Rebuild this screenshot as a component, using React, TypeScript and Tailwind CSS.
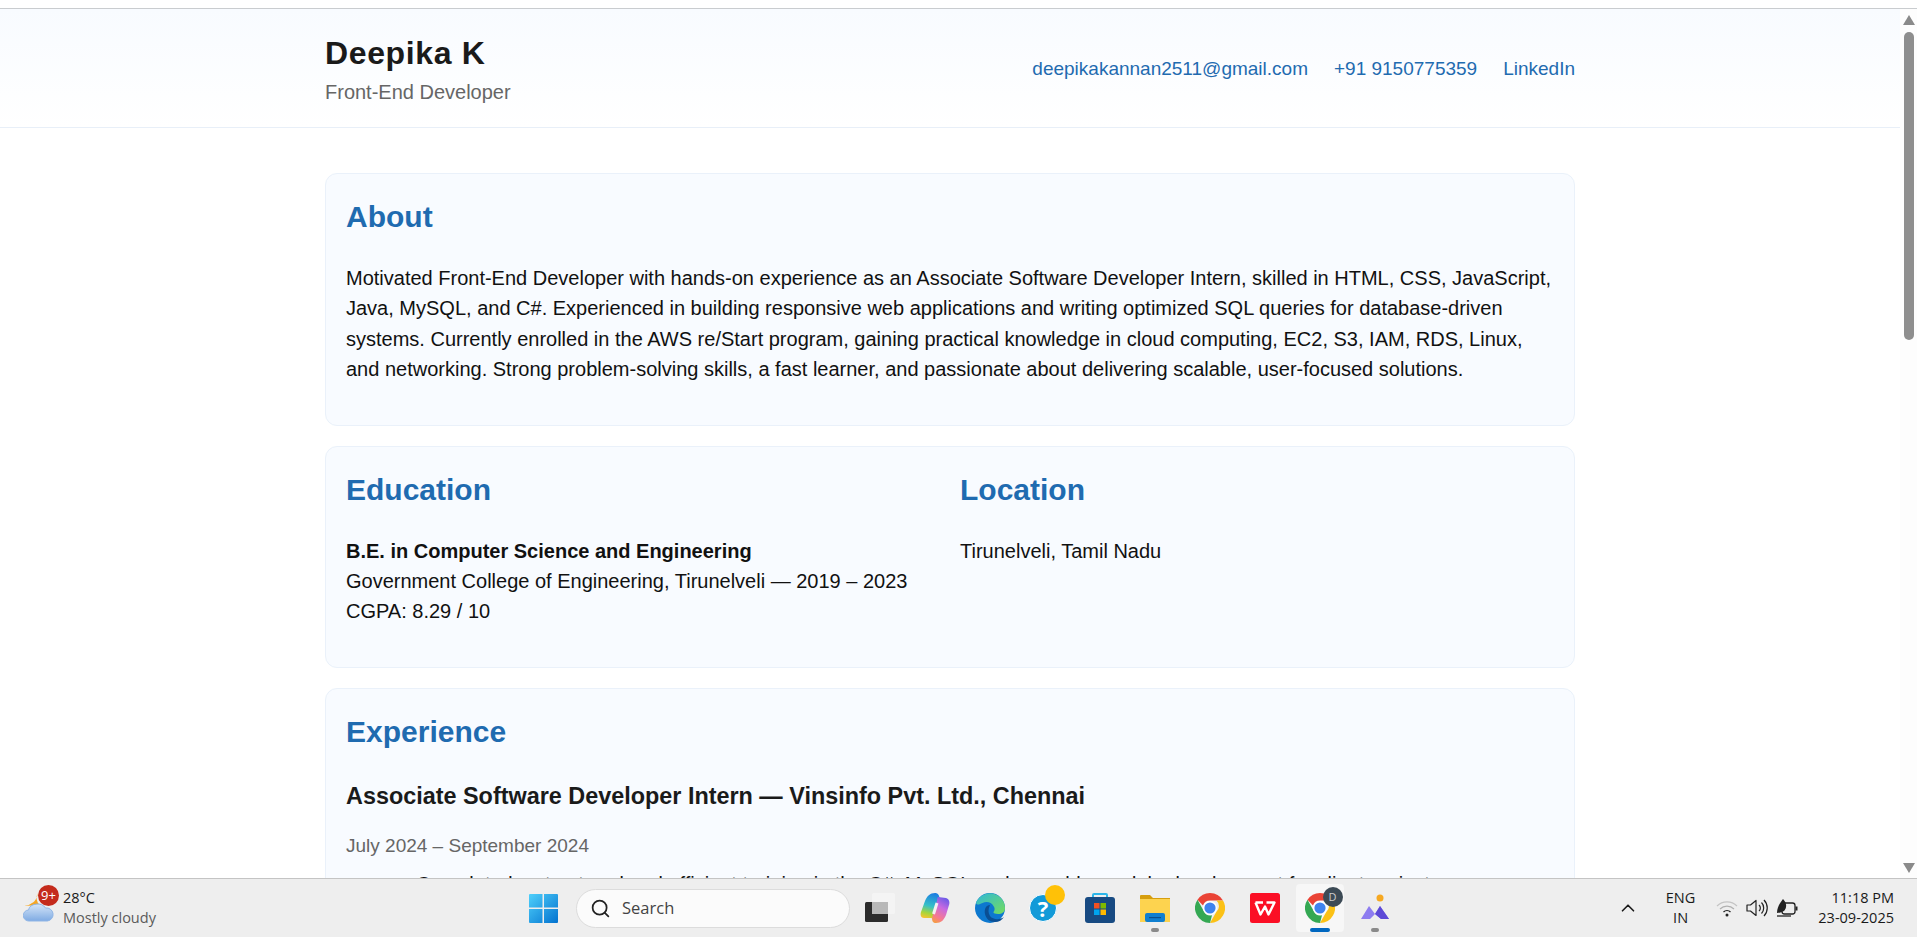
import { Search, ChevronUp } from "lucide-react"

const Card = ({ children, className = "" }: { children: React.ReactNode; className?: string }) => (
  <section className={`rounded-xl border border-[#eaf1fa] bg-[#f8fbff] p-5 ${className}`}>{children}</section>
)

const Heading = ({ children }: { children: React.ReactNode }) => (
  <h2 className="mb-[24px] text-[30px] leading-[45px] font-bold text-[#1f6bb0]">{children}</h2>
)

const WeatherIcon = () => (
  <svg width="32" height="30" viewBox="0 0 32 30">
    <defs>
      <linearGradient id="cloud" x1="0" y1="0" x2="0" y2="1">
        <stop offset="0" stopColor="#d5e5f8" />
        <stop offset="1" stopColor="#7fabe3" />
      </linearGradient>
    </defs>
    <path d="M15 0a9 9 0 0 0 2 12L1 13a12 12 0 0 0 8-3C13 8 14 4 15 0z" fill="#f5a623" />
    <path d="M6 28a5.500 5.500 0 0 1-.5-11 9 7 0 0 1 17-2 6.500 6.500 0 0 1 2 13z" fill="url(#cloud)" stroke="#8fb5e6" strokeWidth="1" />
  </svg>
)

const WindowsIcon = () => (
  <svg width="29" height="29" viewBox="0 0 29 29">
    <defs>
      <linearGradient id="win" x1="0" y1="0" x2="1" y2="1">
        <stop offset="0" stopColor="#4fd0fb" />
        <stop offset="1" stopColor="#0272cf" />
      </linearGradient>
    </defs>
    <path d="M0 1a1 1 0 0 1 1-1h12.500v13.500H0zM15 0h13a1 1 0 0 1 1 1v12.500H15zM0 15h13.500v14H1a1 1 0 0 1-1-1zM15 15h14v13a1 1 0 0 1-1 1H15z" fill="url(#win)" />
  </svg>
)

const ChromeIcon = () => (
  <svg width="30" height="30" viewBox="0 0 30 30">
    <path d="M15 0a15 15 0 0 1 13 7.500H15a7.500 7.500 0 0 0-7 5L2.500 6.800A15 15 0 0 1 15 0z" fill="#ea4335" />
    <path d="M28 7.500A15 15 0 0 1 15 30l6.400-11.200a7.500 7.500 0 0 0 0-11.300z" fill="#fbc116" />
    <path d="M2.500 6.800L8.700 18a7.500 7.500 0 0 0 8.300 4.300L15 30A15 15 0 0 1 2.500 6.800z" fill="#34a853" />
    <circle cx="15" cy="15" r="7" fill="#fff" />
    <circle cx="15" cy="15" r="5.600" fill="#3f83ee" />
  </svg>
)

const TaskView = () => (
  <svg width="30" height="30" viewBox="0 0 30 30">
    <rect x="0" y="9" width="23" height="20" rx="1.500" fill="#2b2b2b" />
    <rect x="7" y="0" width="23" height="21" rx="1.500" fill="#f4f4f4" />
    <rect x="7" y="9" width="16" height="12" fill="#b8b8b8" />
  </svg>
)

const Copilot = () => (
  <svg width="30" height="30" viewBox="0 0 30 30">
    <defs>
      <linearGradient id="cpl" x1="0.500" y1="0" x2="0.300" y2="1">
        <stop offset="0" stopColor="#1d7fe0" />
        <stop offset="0.5" stopColor="#35c0c8" />
        <stop offset="0.8" stopColor="#a7d63a" />
        <stop offset="1" stopColor="#f4c430" />
      </linearGradient>
      <linearGradient id="cpr" x1="0.700" y1="0" x2="0.300" y2="1">
        <stop offset="0" stopColor="#6a5be8" />
        <stop offset="0.4" stopColor="#c86ae0" />
        <stop offset="0.8" stopColor="#f77a8f" />
        <stop offset="1" stopColor="#f59a4a" />
      </linearGradient>
    </defs>
    <path d="M15 0c3 0 4 2 5 6l-5 17c-1 3-3 2-6 2H4c-3 0-4-3-3-6l4-11c2-5 5-8 10-8z" fill="url(#cpl)" />
    <path d="M18 4l8 1c3 1 4 4 3 7l-3 10c-2 5-5 8-10 8-3 0-4-2-4-5l5-17c.3-2 .5-4 1-4z" fill="url(#cpr)" />
    <path d="M17 10l-3.500 11" stroke="#f4f1f1" strokeWidth="3" />
  </svg>
)

const Edge = () => (
  <svg width="30" height="30" viewBox="0 0 30 30">
    <defs>
      <linearGradient id="ed" x1="0" y1="0" x2="1" y2="1">
        <stop offset="0" stopColor="#2fb8d8" />
        <stop offset="1" stopColor="#74dd5c" />
      </linearGradient>
    </defs>
    <circle cx="15" cy="15" r="15" fill="#0d78cf" />
    <path d="M1 10A15 15 0 0 1 30 15c0 4-3 6-7 6-3 0-5-1-4.500-2 1.500-2 1.500-4 0-6-2-4-7-5-11-3-3 1-5 3-6.500 0z" fill="url(#ed)" />
    <path d="M15 12c-4 0-6 4-5 9 1 5 5 8 10 8 4 0 7-2 9-5-4 3-11 3-14-1-2-3-2-7 0-11z" fill="#0b4f94" />
  </svg>
)

const Help = () => (
  <div className="relative h-[30px] w-[30px]">
    <span className="absolute top-[1px] left-[-1px] flex h-[28px] w-[28px] items-center justify-center rounded-full border border-white bg-[#129ad8] text-[22px] leading-none font-bold text-white">?</span>
    <span className="absolute top-[-8px] left-[1px] ml-[14px] h-[20px] w-[20px] rounded-full bg-[#ffc107]" />
  </div>
)

const Store = () => (
  <svg width="30" height="30" viewBox="0 0 30 30">
    <path d="M8 6V2a1 1 0 0 1 1-1h12a1 1 0 0 1 1 1v4" fill="none" stroke="#2cb6ea" strokeWidth="2" />
    <rect x="0" y="4" width="30" height="26" rx="3" fill="#174a82" />
    <rect x="9" y="10" width="5.500" height="5.500" fill="#f25022" />
    <rect x="15.500" y="10" width="5.500" height="5.500" fill="#7fba00" />
    <rect x="9" y="16.500" width="5.500" height="5.500" fill="#00a4ef" />
    <rect x="15.500" y="16.500" width="5.500" height="5.500" fill="#ffb900" />
  </svg>
)

const Folder = () => (
  <svg width="30" height="28" viewBox="0 0 30 28">
    <path d="M0 2a1 1 0 0 1 1-1h9l3 3h17v6H0z" fill="#d69e0e" />
    <rect x="0" y="5" width="30" height="23" fill="#fdd34f" />
    <rect x="5" y="19" width="20" height="9" rx="2" fill="#0f7fd0" />
    <rect x="9" y="23" width="12" height="1.200" fill="#0a4f8c" />
  </svg>
)

const Wps = () => (
  <svg width="30" height="30" viewBox="0 0 30 30">
    <rect width="30" height="30" rx="2.500" fill="#fb0f25" />
    <path d="M5.500 9.500h7.500M5.500 9.500L10.500 21.500 15 13.500 18.500 21.500 24.500 9.500H16.500" fill="none" stroke="#fff" strokeWidth="2.400" strokeLinejoin="round" />
  </svg>
)

const MAppIcon = () => (
  <svg width="30" height="30" viewBox="0 0 30 30">
    <circle cx="20" cy="5" r="3.500" fill="#f6a821" />
    <path d="M1 26L9 13l6 8 5-8 9 13h-8l-6-5-5 5z" fill="#8d7cf0" />
    <path d="M15 21l5-8 9 13h-8z" fill="#5d49d6" />
  </svg>
)

const Wifi = () => (
  <svg width="22" height="18" viewBox="0 0 22 18" fill="none">
    <path d="M1 7a14 14 0 0 1 20 0" stroke="#c4c4c4" strokeWidth="1.200" />
    <path d="M4 10a10 10 0 0 1 14 0" stroke="#b0b0b0" strokeWidth="1.200" />
    <path d="M7.500 13a5 5 0 0 1 7 0" stroke="#222" strokeWidth="1.300" />
    <circle cx="11" cy="16" r="1.500" fill="#222" />
  </svg>
)

const Volume = () => (
  <svg width="22" height="20" viewBox="0 0 22 20" fill="none" stroke="#222" strokeWidth="1.200">
    <path d="M1 7h3.500L10 2.500v15L4.500 13H1z" strokeLinejoin="round" />
    <path d="M13 7a4 4 0 0 1 0 6M15.500 4.500a8 8 0 0 1 0 11M18 2a11.500 11.500 0 0 1 0 16" />
  </svg>
)

const Battery = () => (
  <svg width="22" height="20" viewBox="0 0 22 20" fill="none">
    <rect x="6" y="5" width="13" height="11" rx="2.500" stroke="#222" strokeWidth="1.300" />
    <rect x="19.500" y="8.500" width="2" height="4" fill="#222" />
    <path d="M1 15C1 9 4 5 7 1c4 4 4 9 1 12-2 1-5 2-7 2z" fill="#222" />
    <path d="M1 18h14" stroke="#222" strokeWidth="1.300" />
  </svg>
)

const TaskSlot = ({ children, dot }: { children: React.ReactNode; dot?: boolean }) => (
  <div className="relative flex h-[58px] w-[55px] items-center justify-center">
    {children}
    {dot && <span className="absolute bottom-[5px] left-[23.500px] h-[4px] w-[8px] rounded-full bg-[#8a8a8a]" />}
  </div>
)

export default function App() {
  return (
    <div className="flex h-[937px] flex-col overflow-hidden bg-white font-['Liberation_Sans',Arial,sans-serif] text-[#111]">
      <div className="h-[9px] shrink-0 border-b border-[#c9cccf] bg-white" />
      <div className="relative min-h-0 flex-1 overflow-hidden pr-[17px]">
        <header className="border-b border-[#e8eff8] bg-gradient-to-b from-[#f8fbff] to-white">
          <div className="mx-auto flex h-[118px] w-[1250px] items-center justify-between pt-[1px]">
            <div>
              <h1 className="text-[32px] leading-[40px] font-bold tracking-[0.64px] text-[#1a1a1a]">Deepika K</h1>
              <p className="mt-[6px] text-[20px] leading-[26px] text-[#666]">Front-End Developer</p>
            </div>
            <nav className="mt-[1px] flex gap-[26px] text-[19px] leading-[26px] text-[#1f6bb0]">
              <a>deepikakannan2511@gmail.com</a>
              <a>+91 9150775359</a>
              <a>LinkedIn</a>
            </nav>
          </div>
        </header>
        <main className="mx-auto flex w-[1250px] flex-col gap-[20px] pt-[45px] text-[20px] leading-[30.400px]">
          <Card className="pb-[40px]">
            <Heading>About</Heading>
            <p>
              Motivated Front-End Developer with hands-on experience as an Associate Software Developer Intern, skilled in
              HTML, CSS, JavaScript, Java, MySQL, and C#. Experienced in building responsive web applications and writing
              optimized SQL queries for database-driven systems. Currently enrolled in the AWS re/Start program, gaining
              practical knowledge in cloud computing, EC2, S3, IAM, RDS, Linux, and networking. Strong problem-solving
              skills, a fast learner, and passionate about delivering scalable, user-focused solutions.
            </p>
          </Card>
          <Card className="grid grid-cols-2 gap-x-[20px] pb-[40px]">
            <div>
              <Heading>Education</Heading>
              <p className="font-bold">B.E. in Computer Science and Engineering</p>
              <p>Government College of Engineering, Tirunelveli — 2019 – 2023</p>
              <p>CGPA: 8.29 / 10</p>
            </div>
            <div>
              <Heading>Location</Heading>
              <p>Tirunelveli, Tamil Nadu</p>
            </div>
          </Card>
          <Card>
            <Heading>Experience</Heading>
            <h3 className="mt-[27px] text-[23.400px] leading-[30px] font-bold text-[#1a1a1a]">
              Associate Software Developer Intern — Vinsinfo Pvt. Ltd., Chennai
            </h3>
            <p className="mt-[20px] text-[19px] text-[#666]">July 2024 – September 2024</p>
            <ul className="mt-[8px] list-disc pl-[70px]">
              <li>Completed a structured and efficient training in the C#, MySQL and reusable module development for client projects.</li>
            </ul>
          </Card>
        </main>
        <div className="absolute top-0 right-0 bottom-0 flex w-[17px] flex-col items-center bg-[#fdfdfd]">
          <span className="mt-[6px] h-0 w-0 border-x-[6px] border-b-[10px] border-x-transparent border-b-[#8a8a8a]" />
          <span className="mt-[7px] h-[308px] w-[10px] rounded-full bg-[#8e8e8e]" />
          <span className="mt-auto mb-[5px] h-0 w-0 border-x-[6px] border-t-[10px] border-x-transparent border-t-[#8a8a8a]" />
        </div>
      </div>
      <footer className="relative flex h-[59px] shrink-0 items-center justify-between border-t border-[#c4c4c4] bg-[#eeeeee] font-['Open_Sans',sans-serif]">
        <div className="relative flex items-center pl-[23px]">
          <WeatherIcon />
          <span className="absolute top-[-3px] left-[38px] flex h-[21px] w-[21px] items-center justify-center rounded-full bg-[#c42b1c] text-[13px] leading-none text-white">9+</span>
          <div className="ml-[8px] text-[14.500px] leading-[20px]">
            <div className="text-[#1a1a1a]">28°C</div>
            <div className="text-[#5a5a5a]">Mostly cloudy</div>
          </div>
        </div>
        <div className="absolute top-0 left-[516px] flex h-[58px] items-center">
          <TaskSlot><WindowsIcon /></TaskSlot>
          <div className="mr-[2.500px] ml-[5px] flex h-[39px] w-[274px] items-center gap-[11px] rounded-full border border-[#dcdcdc] bg-[#fbfbfb] pl-[13px] text-[16.500px] text-[#444]">
            <Search size={21} strokeWidth={2} className="text-[#222]" />
            Search
          </div>
          <TaskSlot><TaskView /></TaskSlot>
          <TaskSlot><Copilot /></TaskSlot>
          <TaskSlot><Edge /></TaskSlot>
          <TaskSlot><Help /></TaskSlot>
          <TaskSlot><Store /></TaskSlot>
          <TaskSlot dot><Folder /></TaskSlot>
          <TaskSlot><ChromeIcon /></TaskSlot>
          <TaskSlot><Wps /></TaskSlot>
          <TaskSlot>
            <div className="absolute inset-x-[3.500px] top-[5px] h-[48px] rounded bg-[#f7f7f7]" />
            <div className="relative"><ChromeIcon /></div>
            <span className="absolute top-[8px] right-[5px] flex h-[20px] w-[20px] items-center justify-center rounded-full bg-[#3c4a55] text-[11px] text-[#ccc]">D</span>
            <span className="absolute bottom-[5px] left-[17.500px] h-[4px] w-[20px] rounded-full bg-[#0067c0]" />
          </TaskSlot>
          <TaskSlot dot><MAppIcon /></TaskSlot>
        </div>
        <div className="flex items-center pr-[23px] text-[#1a1a1a]">
          <ChevronUp size={22} strokeWidth={1.800} className="mr-[27px]" />
          <div className="mr-[21px] text-center text-[14.500px] leading-[20px]">
            <div>ENG</div>
            <div>IN</div>
          </div>
          <div className="mr-[20px] flex items-center gap-[8px]">
            <Wifi />
            <Volume />
            <Battery />
          </div>
          <div className="text-right text-[14.500px] leading-[20px]">
            <div>11:18 PM</div>
            <div>23-09-2025</div>
          </div>
        </div>
      </footer>
    </div>
  )
}
